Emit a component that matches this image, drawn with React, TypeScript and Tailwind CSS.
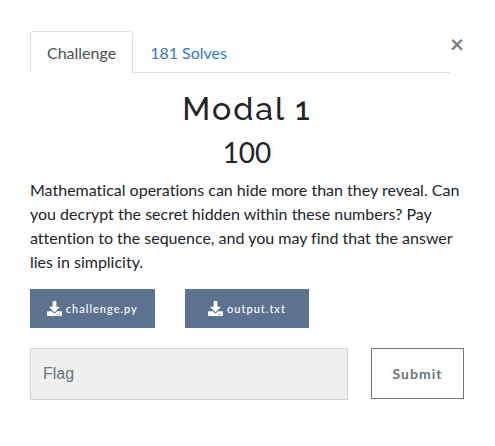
import React from "react";
import { FaDownload } from "react-icons/fa";

const files = ["challenge.py", "output.txt"];

export default function App() {
  return (
    <main className="min-h-screen bg-white pl-[30px] pr-[31px] pt-[31px] font-['Lato',sans-serif] text-base leading-6 text-[#212529] [font-variant-ligatures:none]">
      <div className="flex items-start justify-between">
        <nav className="flex grow border-b border-[#dee2e6]" aria-label="Challenge views">
          <button type="button" className="-mb-px rounded-t border border-[#dee2e6] border-b-white px-4 pt-[9px] pb-[7px] text-[#495057]">
            Challenge
          </button>
          <button type="button" className="-mb-px border border-transparent px-4 pt-[9px] pb-[7px] text-[#337ab7]">
            181 Solves
          </button>
        </nav>
        <button type="button" aria-label="Close" className="w-[14px] text-2xl font-bold leading-[26px] text-[#7f7f7f]">
          ×
        </button>
      </div>
      <h2 className="mt-4 text-center font-['Raleway','Lato',sans-serif] text-[32px] font-medium leading-10 tracking-[2px]">Modal 1</h2>
      <h3 className="mt-[7px] text-center text-[28px] leading-8">100</h3>
      <p className="mt-[10px]">
        Mathematical operations can hide more than they reveal. Can you decrypt the secret hidden within these numbers? Pay attention to the sequence, and you may find that the answer lies in simplicity.
      </p>
      <div className="mt-[15px] grid grid-cols-3 gap-[30px]">
        {files.map((file) => (
          <a key={file} href="#" className="flex h-[39px] items-center justify-center gap-1 bg-[#5b7290] pt-px text-[11px] font-medium tracking-[1px] text-white">
            <FaDownload size={15} className="mb-0.5" />
            {file}
          </a>
        ))}
      </div>
      <form className="mt-5 flex gap-[23px]">
        <input aria-label="Flag" placeholder="Flag" className="h-[52px] min-w-0 grow border border-[#ced4da] bg-[#efefef] px-3 font-['Liberation_Sans',sans-serif] placeholder:text-[#6c757d]" />
        <button type="button" className="h-[51px] w-[93px] border border-[#6c757d] text-sm font-bold tracking-[1px] text-[#6c757d]">
          Submit
        </button>
      </form>
    </main>
  );
}
